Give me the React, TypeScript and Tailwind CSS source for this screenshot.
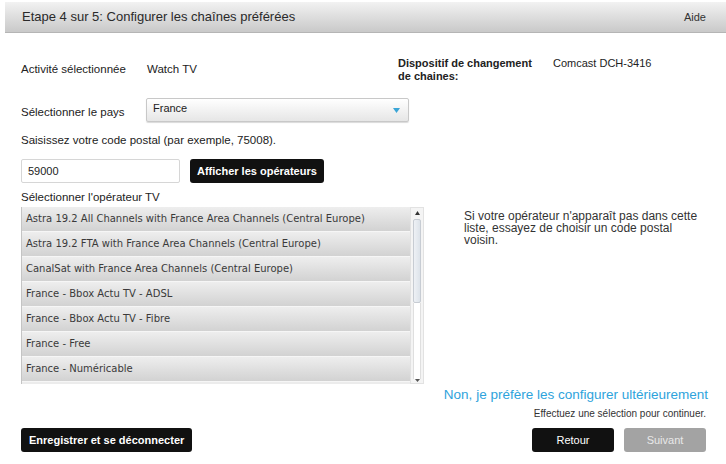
const operators = [
  "Astra 19.2 All Channels with France Area Channels (Central Europe)",
  "Astra 19.2 FTA with France Area Channels (Central Europe)",
  "CanalSat with France Area Channels (Central Europe)",
  "France - Bbox Actu TV - ADSL",
  "France - Bbox Actu TV - Fibre",
  "France - Free",
  "France - Numéricable",
];

export default function App() {
  return (
    <div className="w-[726px] h-[464px] overflow-hidden bg-white text-[#222] font-['Liberation_Sans',Arial,sans-serif]">
      {/* Title bar */}
      <header className="mt-[2px] ml-[5px] h-[31px] flex items-center justify-between pl-[17px] pr-[20px] bg-gradient-to-b from-[#f2f2f2] to-[#c9c9c9] border-b border-[#b5b5b5]">
        <h1 className="text-[13px] text-[#2a2a2a]">Etape 4 sur 5: Configurer les chaînes préférées</h1>
        <span className="text-[11px] text-[#333]">Aide</span>
      </header>

      <div className="pl-[21px] pr-[20px]">
        {/* Activity + device */}
        <div className="flex mt-[24px]">
          <div className="w-[377px] flex items-center h-[26px] text-[11.5px]">
            <span className="w-[126px]">Activité sélectionnée</span>
            <span>Watch TV</span>
          </div>
          <div className="flex text-[11px] leading-[13px]">
            <span className="w-[155px] pr-[18px] font-bold">Dispositif de changement de chaines:</span>
            <span>Comcast DCH-3416</span>
          </div>
        </div>
        <div className="flex items-center mt-[15px]">
          <span className="w-[125px] text-[11.5px] mt-[6px]">Sélectionner le pays</span>
          <div className="w-[263px] h-[24px] rounded-[2px] border border-[#c8c8c8] bg-gradient-to-b from-white to-[#e6e6e6] flex items-center justify-between px-[6px] shadow-[0_1px_1px_rgba(0,0,0,0.15)]">
            <span className="text-[11px] -mt-[4px]">France</span>
            <svg width="7" height="5" viewBox="0 0 7 5" className="mr-[2px]">
              <path d="M0 0h7L3.5 5z" fill="#3aa5d6" />
            </svg>
          </div>
        </div>

        {/* Postal code */}
        <p className="text-[11.5px] mt-[10px]">Saisissez votre code postal (par exemple, 75008).</p>
        <div className="flex items-center gap-[10px] mt-[10px]">
          <div className="w-[159px] h-[24px] border border-[#d6d6d6] rounded-[2px] bg-white flex items-center px-[6px] text-[11px]">59000</div>
          <button className="h-[24px] px-[7px] rounded-[3px] bg-[#111] text-white text-[11px] font-bold">Afficher les opérateurs</button>
        </div>

        {/* Operators */}
        <p className="text-[11.5px] mt-[6px]">Sélectionner l'opérateur TV</p>
        <div className="flex">
          <div className="flex">
            <div className="w-[389px] h-[177px] overflow-hidden border-l border-[#c4c4c4] bg-[#ececec]">
              {operators.map((op) => (
                <div
                  key={op}
                  className="h-[25px] flex items-center px-[4px] text-[10px] text-[#3a3a3a] font-['DejaVu_Sans',Verdana,sans-serif] bg-gradient-to-b from-[#eeeeee] to-[#d2d2d2] border-b border-[#f6f6f6]"
                >
                  {op}
                </div>
              ))}
            </div>
            <div className="w-[14px] h-[177px] bg-[#f4f4f4] border border-[#e2e2e2] flex flex-col items-center">
              <svg width="5" height="4" viewBox="0 0 5 4" className="mt-[3px]">
                <path d="M2.5 0L5 4H0z" fill="#333" />
              </svg>
              <div className="w-[8px] h-[84px] mt-[4px] rounded-[2px] bg-gradient-to-r from-[#eef1f5] to-[#dde3ea] border border-[#c7ccd3]" />
              <div className="flex-1 w-[8px] border-x border-[#dfdfdf] bg-white" />
              <svg width="5" height="3" viewBox="0 0 5 3" className="mb-[1px]">
                <path d="M0 0h5L2.5 3z" fill="#555" />
              </svg>
            </div>
          </div>
          <p className="ml-[40px] mt-[3px] w-[236px] text-[12px] leading-[12px] text-[#333]">
            Si votre opérateur n'apparaît pas dans cette liste, essayez de choisir un code postal voisin.
          </p>
        </div>

        {/* Bottom */}
        <div className="flex justify-between items-end mt-[1px]">
          <button className="h-[24px] px-[8px] rounded-[3px] bg-[#111] text-white text-[11px] font-bold">Enregistrer et se déconnecter</button>
          <div className="flex flex-col items-end">
            <a className="text-[13.5px] text-[#2ea3dc] mr-[-2px]">Non, je préfère les configurer ultérieurement</a>
            <span className="text-[10px] text-[#333] mt-[1px]">Effectuez une sélection pour continuer.</span>
            <div className="flex gap-[10px] mt-[7px]">
              <button className="w-[82px] h-[24px] rounded-[3px] bg-[#111] text-white text-[11px]">Retour</button>
              <button className="w-[82px] h-[24px] rounded-[3px] bg-[#a3a3a3] text-[#e8e8e8] text-[11px]">Suivant</button>
            </div>
          </div>
        </div>
      </div>
    </div>
  );
}
